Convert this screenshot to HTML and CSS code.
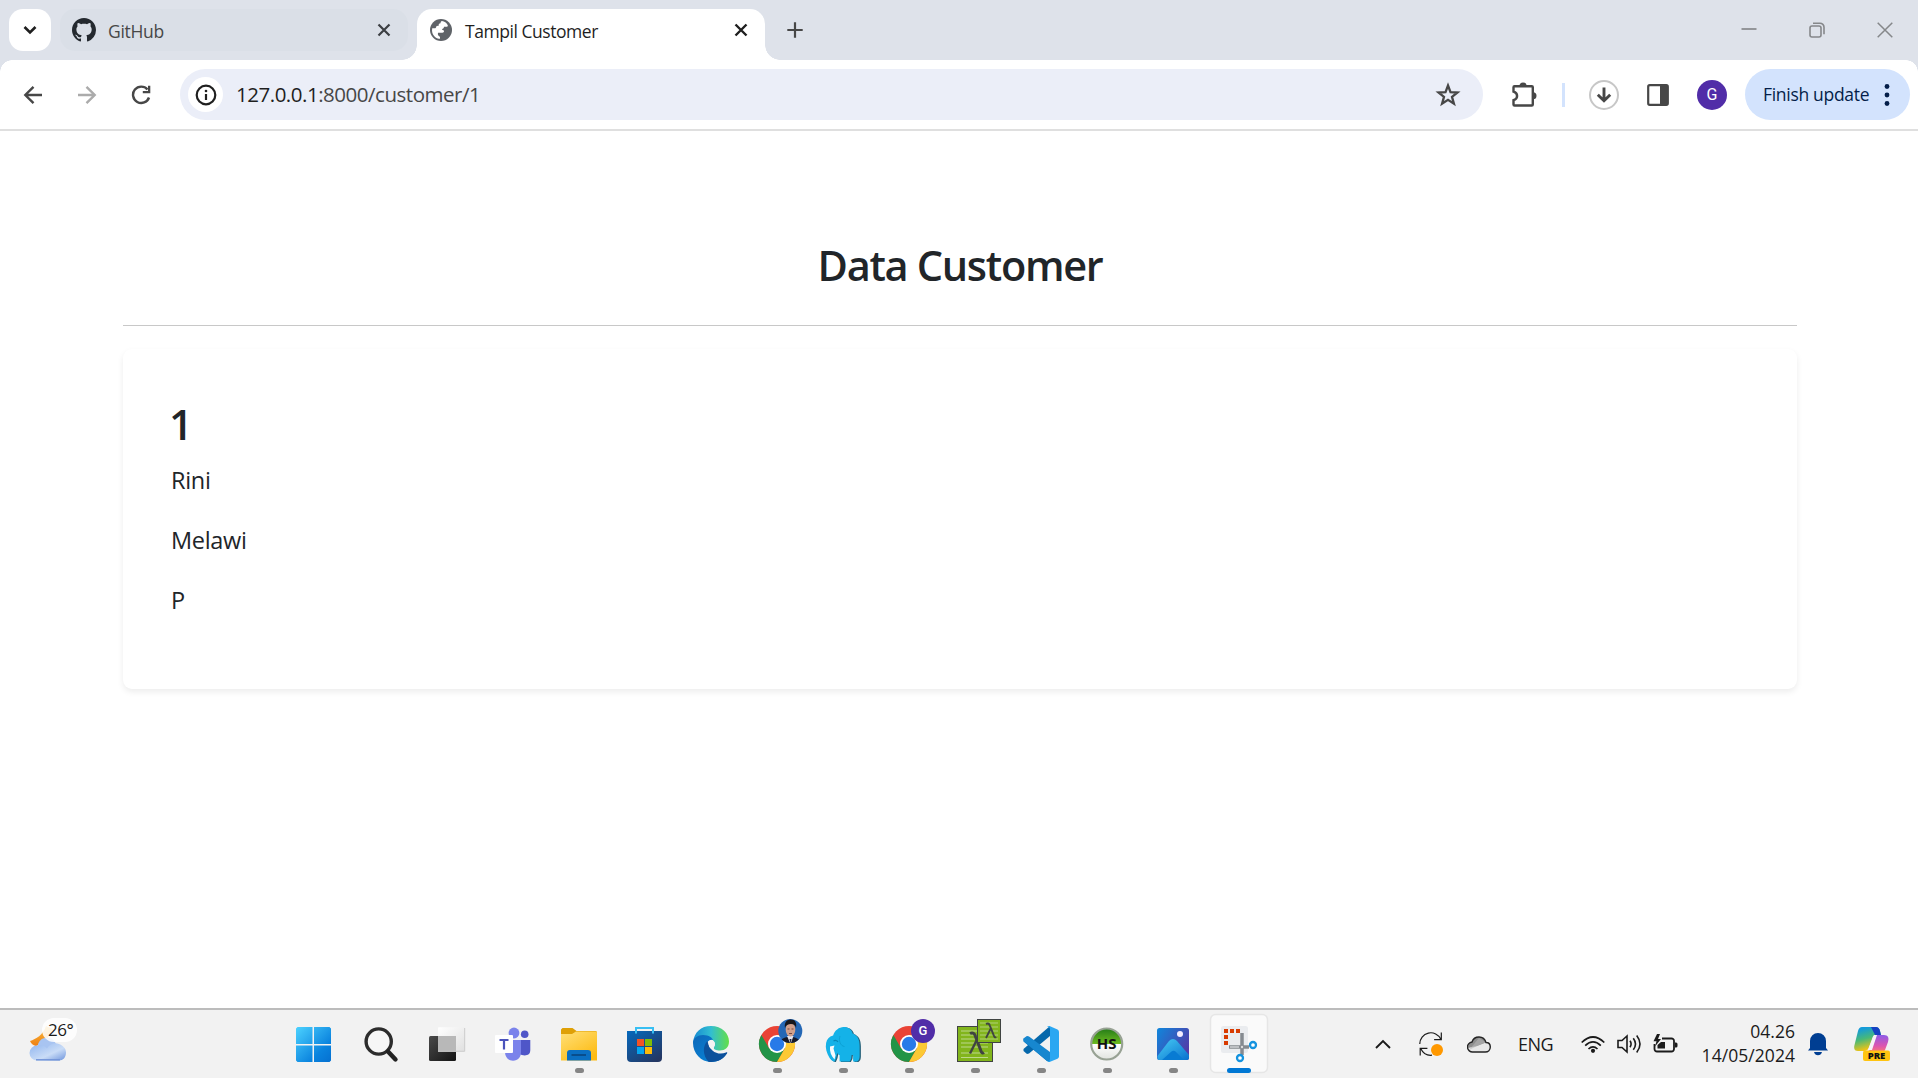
FILE: index.html
```html
<!DOCTYPE html>
<html lang="id">
<head>
<meta charset="utf-8">
<title>Tampil Customer</title>
<link rel="stylesheet" href="styles.css">
</head>
<body>
<div class="screen">
  <header class="tabstrip">
    <button class="tab-search" aria-label="Search tabs"><svg width="42" height="42" viewBox="0 0 42 42"><path d="M15.5 18l5.5 5.5 5.5-5.5" fill="none" stroke="#1f1f1f" stroke-width="2.6"/></svg></button>
    <div class="tab">
      <svg class="favicon" width="24" height="24" viewBox="0 0 16 16"><path fill="#24292f" d="M8 0C3.58 0 0 3.58 0 8c0 3.54 2.29 6.53 5.47 7.59.4.07.55-.17.55-.38 0-.19-.01-.82-.01-1.49-2.01.37-2.53-.49-2.69-.94-.09-.23-.48-.94-.82-1.13-.28-.15-.68-.52-.01-.53.63-.01 1.08.58 1.23.82.72 1.21 1.87.87 2.33.66.07-.52.28-.87.51-1.07-1.78-.2-3.64-.89-3.64-3.95 0-.87.31-1.59.82-2.15-.08-.2-.36-1.02.08-2.12 0 0 .67-.21 2.2.82.64-.18 1.32-.27 2-.27s1.36.09 2 .27c1.53-1.04 2.2-.82 2.2-.82.44 1.1.16 1.92.08 2.12.51.56.82 1.27.82 2.15 0 3.07-1.87 3.75-3.65 3.95.29.25.54.73.54 1.48 0 1.07-.01 1.93-.01 2.2 0 .21.15.46.55.38A8.01 8.01 0 0 0 16 8c0-4.42-3.58-8-8-8z"/></svg>
      <span class="tab-title tab-title-github">GitHub</span>
      <svg class="tab-close" width="14" height="14" viewBox="0 0 14 14"><path d="M1.500 1.500l11 11M12.500 1.500l-11 11" stroke="#3c3f43" stroke-width="2.200"/></svg>
    </div>
    <div class="tab tab-active">
      <svg class="favicon" width="24" height="24" viewBox="0 0 24 24"><circle cx="12" cy="12" r="11" fill="#5f6368"/><path d="M13 3.200c-1 .2-1.500 1.300-1.500 2.300-1.500.2-2 1.200-1.800 2.400l-2.200.2c-.3 1.800-.7 2.200-2 2.400H3.200c-.6 3.500.2 6.500 2.800 8.600 2 1.500 3.500 1.800 5 1.900.3-1.300-.2-2.200-1-2.700-1-.5-1.300-1.500-1-3.300h4.200c1.700-.2 2-1.200 1.700-2.400-1 0-1.700-.3-1.900-1.400 1.300-.3 2-1 2-2.200l2.500-.1c1 .1 1.300-.5 1.300-1.500C17.500 5 15.500 3.500 13 3.200z" fill="#fff" transform="translate(0 -.2)"/><path d="M15.500 9.800c2 .1 3.500 1.200 5 1.200-.1 3.500-1.500 6.500-4.500 8-1.300-1-.4-2.300-.4-3.500 1-.6 1.600-1.500 1.600-2.600-.4-1.400-1.500-1.600-1.700-3.100z" fill="#5f6368"/></svg>
      <span class="tab-title tab-title-customer">Tampil Customer</span>
      <svg class="tab-close" width="14" height="14" viewBox="0 0 14 14"><path d="M1.500 1.500l11 11M12.500 1.500l-11 11" stroke="#1f1f1f" stroke-width="2.400"/></svg>
    </div>
    <svg class="new-tab" width="16" height="16" viewBox="0 0 16 16"><path d="M8 .3v15.400M.3 8h15.400" stroke="#474747" stroke-width="2.200"/></svg>
    <div class="window-controls">
      <svg width="16" height="16" viewBox="0 0 16 16"><path d="M.5 7h15" stroke="#8c8e91" stroke-width="1.800"/></svg>
      <svg width="16" height="16" viewBox="0 0 16 16"><g fill="none" stroke="#85878a" stroke-width="1.600"><rect x="1" y="4" width="11" height="11" rx="2"/><path d="M4 1.200h7a4 4 0 0 1 4 4v7"/></g></svg>
      <svg width="16" height="16" viewBox="0 0 16 16"><path d="M.7.700l14.600 14.600M15.300.7L.7 15.300" stroke="#85878a" stroke-width="1.500"/></svg>
    </div>
  </header>

  <nav class="toolbar">
    <div class="nav-buttons">
      <svg width="20" height="20" viewBox="0 0 20 20"><path d="M10.500 1.800L2.300 10l8.200 8.200M2.500 10H19" fill="none" stroke="#474747" stroke-width="2.400"/></svg>
      <svg width="20" height="20" viewBox="0 0 20 20"><path d="M9.500 1.800L17.700 10l-8.200 8.200M17.500 10H1" fill="none" stroke="#ababab" stroke-width="2.400"/></svg>
      <svg width="20" height="20" viewBox="0 0 20 20"><path d="M16.500 4.500A8.200 8.200 0 1 0 18 12.500" fill="none" stroke="#474747" stroke-width="2.400"/><path d="M19.300.8v7.500h-7.500V6h5.200V.8z" fill="#474747"/></svg>
    </div>
    <div class="omnibox">
      <span class="site-info"><svg width="22" height="22" viewBox="0 0 22 22"><circle cx="11" cy="11" r="9.300" fill="none" stroke="#1f1f1f" stroke-width="2.200"/><path d="M11 10v6" stroke="#1f1f1f" stroke-width="2.200"/><circle cx="11" cy="7" r="1.300" fill="#1f1f1f"/></svg></span>
      <span class="url"><b>127.0.0.1</b>:8000/customer/1</span>
      <svg class="star" width="26" height="26" viewBox="0 0 26 26"><path d="M13 3.500l2.500 6.600 7 .4-5.500 4.400 1.900 6.800-5.900-3.900-5.900 3.900 1.900-6.800-5.500-4.400 7-.4z" fill="none" stroke="#474747" stroke-width="2.300"/></svg>
    </div>
    <svg class="extensions" width="27" height="26" viewBox="0 0 27 26"><path d="M3.500 4.200h17.300a1 1 0 0 1 1 1v17.300a1 1 0 0 1-1 1H3.500a1 1 0 0 1-1-1v-4.300c4.800-1.500 4.800-7 0-8.500V5.200a1 1 0 0 1 1-1z" fill="none" stroke="#474747" stroke-width="2.400"/><path d="M8.500 4a3.500 3.500 0 0 1 7 0zM22 10.300a3.500 3.500 0 0 1 0 7z" fill="#474747"/></svg>
    <span class="divider"></span>
    <svg class="download" width="30" height="30" viewBox="0 0 30 30"><circle cx="15" cy="15" r="14" fill="none" stroke="#c7c7c7" stroke-width="2"/><path d="M15 7.500V20M8.800 14.800l6.200 6 6.200-6" fill="none" stroke="#474747" stroke-width="2.900"/></svg>
    <svg class="side-panel" width="22" height="22" viewBox="0 0 22 22"><rect x="1.200" y="1.200" width="19.600" height="19.600" rx="1.500" fill="none" stroke="#474747" stroke-width="2.200"/><path d="M13 1h7v20h-7z" fill="#474747"/></svg>
    <span class="profile">G</span>
    <div class="update"><span class="update-label">Finish update</span><svg width="6" height="22" viewBox="0 0 6 22"><g fill="#041e49"><circle cx="3" cy="2.500" r="2.400"/><circle cx="3" cy="11" r="2.400"/><circle cx="3" cy="19.500" r="2.400"/></g></svg></div>
  </nav>

  <main class="page">
    <h1 class="page-title">Data Customer</h1>
    <hr class="rule">
    <section class="card">
      <h2 class="card-id">1</h2>
      <p>Rini</p>
      <p>Melawi</p>
      <p>P</p>
    </section>
  </main>

  <footer class="taskbar">
    <div class="weather">
      <svg width="80" height="68" viewBox="0 0 80 68">
        <defs><linearGradient id="cl" x1="0" x2="1" y1="0" y2="1"><stop offset="0" stop-color="#8fb4ee"/><stop offset=".6" stop-color="#c9dcf7"/><stop offset="1" stop-color="#6f95dc"/></linearGradient><linearGradient id="sun" x1="0" x2="0" y1="0" y2="1"><stop offset="0" stop-color="#fbbd3c"/><stop offset="1" stop-color="#ee7f12"/></linearGradient></defs>
        <path d="M30 31c6-2 13-6 16-15l7 3-8 13-9 4c-3-.5-5-2.500-6-5z" fill="url(#sun)"/>
        <path d="M38 34c2-5 6-7 10-6 4 0 6 2 8 6l-4 12H38z" fill="#a8c4f1"/>
        <path d="M37 50.500a7.500 7.500 0 0 1 0-15c5-1 8 .5 10 3 3-5 8-6 12-4.500 5 2 7 5 7 8.500 0 5-3 8-7 8z" fill="url(#cl)"/>
        <path d="M36 49.800h24" stroke="#7395d8" stroke-width="1.500"/>
        <rect x="42" y="8" width="35" height="24" rx="12" fill="#fff" fill-opacity=".85"/>
      </svg>
      <span class="temperature">26°</span>
    </div>

    <div class="apps">
      <svg class="app" viewBox="0 0 66 68"><defs><linearGradient id="win" gradientUnits="userSpaceOnUse" x1="16" y1="17" x2="51" y2="52"><stop offset="0" stop-color="#4cd2ff"/><stop offset=".7" stop-color="#0a83de"/><stop offset="1" stop-color="#0570d0"/></linearGradient></defs><path d="M17.500 17H32.500v17H16V18.500zM34 17h15.500l1.500 1.500V34H34zM16 35.500h16.500V52h-15L16 50.500zM34 35.500h17v15L49.500 52H34z" fill="url(#win)"/></svg>
      <svg class="app" viewBox="0 0 66 68"><circle cx="32.700" cy="31.500" r="12.600" fill="#f6f6f6" stroke="#2c2c2c" stroke-width="3.400"/><path d="M42 41.500l7.500 8" stroke="#222" stroke-width="4.400" stroke-linecap="round"/></svg>
      <svg class="app" viewBox="0 0 66 68"><defs><linearGradient id="tv" x2="1" y2="1"><stop stop-color="#4a4a4a"/><stop offset="1" stop-color="#141414"/></linearGradient><linearGradient id="tw" x2="1" y2="1"><stop stop-color="#fff"/><stop offset="1" stop-color="#e0e0e0"/></linearGradient></defs><rect x="17" y="26" width="27" height="25" rx="1.500" fill="url(#tv)"/><rect x="26" y="17.300" width="26.700" height="24" rx="1" fill="url(#tw)"/><path d="M26 26h18v15.500H26z" fill="#b8b8b8"/><path d="M26 41.300h26.700V18" fill="none" stroke="#ccc"/></svg>
      <svg class="app" viewBox="0 0 66 68"><circle cx="46.700" cy="24.300" r="3.800" fill="#4f56c8"/><path d="M41 30h11.300v10c0 6-6 6.500-11.300 4z" fill="#4f56c8"/><circle cx="36" cy="23" r="5.400" fill="#7b83eb"/><path d="M27 30h16v12c0 5-3 8.700-8 8.700S27 47 27 42z" fill="#7b83eb"/><rect x="17" y="25" width="18" height="18" rx="1" fill="#fff"/><path d="M21.500 30h9M26 30v9.500" stroke="#4b53bc" stroke-width="2.200"/></svg>
      <svg class="app" viewBox="0 0 66 68"><defs><linearGradient id="fo" x2=".7" y2="1"><stop stop-color="#ffe079"/><stop offset="1" stop-color="#fdbb13"/></linearGradient></defs><path d="M17 19.500l1.500-1.500h10l4 3H52l1 1v8H17z" fill="#dfa006"/><path d="M17 24h11l4-2.500h20l1 1v28H17z" fill="url(#fo)"/><path d="M23 50.500V43q0-3 3-3h18q3 0 3 3v7.500z" fill="#0b6fc2"/><path d="M27.500 45h14.500" stroke="#0a4a86" stroke-width="1.800"/><rect class="dot" x="31" y="58" width="9" height="5" rx="2.500"/></svg>
      <svg class="app" viewBox="0 0 66 68"><defs><linearGradient id="st" x2=".8" y2="1"><stop stop-color="#0669bd"/><stop offset="1" stop-color="#243763"/></linearGradient></defs><path d="M17 21h35v27q0 4-4 4H21q-4 0-4-4z" fill="url(#st)"/><path d="M26 23.500V18h17v5.500" fill="none" stroke="#38bff3" stroke-width="2"/><path d="M27 29h7v7h-7z" fill="#f35325"/><path d="M35 29h7v7h-7z" fill="#81bc06"/><path d="M27 37h7v7h-7z" fill="#05a6f0"/><path d="M35 37h7v7h-7z" fill="#ffba08"/></svg>
      <svg class="app" viewBox="0 0 66 68"><defs><linearGradient id="e1" x2="1"><stop stop-color="#1589d3"/><stop offset=".5" stop-color="#32bed1"/><stop offset="1" stop-color="#63df48"/></linearGradient><linearGradient id="e2" x2="1" y2="1"><stop stop-color="#0d67b8"/><stop offset="1" stop-color="#078bdf"/></linearGradient></defs><path d="M17 33C18 22 25 16 35 16c11 0 18 7.500 18 15.500 0 6-4 9-9 9-4 0-7.500-1-6-3.500 3-4-1-8-5-8-7 0-13 3-16 4z" fill="url(#e1)"/><path d="M17 33c0-5 5-8 10-8 6 0 9.500 3 10 5-4-1-7 3-6.500 6C32 45 41 47 51 43c-4 6-9 9-16 9-10 0-18-9-18-19z" fill="url(#e2)"/><path d="M31.500 31c-5 5-5 14 1 20.800 8 1 15-2.500 18.500-8.300.7-1-.2-1.400-1-1-7 3-16.500 0-18.500-11.500z" fill="#0c519c"/><path d="M36 30a4.500 4.500 0 0 1 2 7c-1 1.500 0 2.500 2 3-5-.2-8-3-7-7 .4-2 1.500-3 3-3z" fill="#f3f3f3"/></svg>
      <svg class="app" viewBox="0 0 66 68"><defs><g id="chrome"><circle cx="35" cy="34" r="18" fill="#e94335"/><path d="M35 34L27.200 38.500 19.400 25A18 18 0 0 0 35 52l7.800-13.500z" fill="#229447"/><path d="M35 52A18 18 0 0 0 50.600 25H35l7.800 13.500z" fill="#fcc934"/><circle cx="35" cy="34" r="9" fill="#fff"/><circle cx="35" cy="34" r="7.200" fill="#287ae8"/></g><clipPath id="pc"><circle cx="48.300" cy="21" r="12"/></clipPath></defs><use href="#chrome"/><g clip-path="url(#pc)"><path d="M36 9h25v25H36z" fill="#2467b5"/><path d="M37 34c1-5 5-7 11-7s10 2 11 7z" fill="#171a29"/><path d="M45 26l3.500 8 3-8z" fill="#e5e5f0"/><path d="M47.500 29l1 5 1-5z" fill="#222842"/><ellipse cx="48.500" cy="19.500" rx="4.800" ry="7" fill="#d0a08c"/><path d="M43 18c-1-6 2-8.500 6-8.500s6 3 5 8.500c-1-3-2-4-5-4s-5 1-6 4z" fill="#17171c"/><path d="M45.500 19h2M49.500 19h2M47 23.500h3" stroke="#77473c"/></g><rect class="dot" x="31" y="58" width="9" height="5" rx="2.500"/></svg>
      <svg class="app" viewBox="0 0 66 68"><defs><path id="elephant" d="M22 48c-3-5-4.500-10-3.500-15 .8-4 3-6.500 7-7.500 1.500-5 6-8.500 10.500-8.500 5 0 8 2.500 9 6.500 5 2 7 6 7 12.500V46q0 4-2.500 5.500h-4V45h-1.500q0 4-2 6.500h-10V45q-1.500 0-2.500-2-.5 5-2.500 8.500H26q-2.500-1-4-3.500z"/></defs><use href="#elephant" x=".9" y=".6" fill="#26627a"/><use href="#elephant" x="-.4" fill="#14b2e8"/><path d="M25.500 31q2.500-1.500 4.500.8" stroke="#0887b5" stroke-width="1.200" fill="none"/><path d="M32 26c-1.500 4 0 10 4.500 10.500" fill="none" stroke="#0da2d5" stroke-width="1"/><path d="M22 36.500l4.500-1-1 3 2 7-1 4c-3.500-4-5-8-4.500-13z" fill="#f7fbfd"/><rect class="dot" x="31" y="58" width="9" height="5" rx="2.500"/></svg>
      <svg class="app" viewBox="0 0 66 68"><use href="#chrome"/><circle cx="49" cy="21" r="12" fill="#512da8"/><text class="badge-g" x="49" y="25.300">G</text><rect class="dot" x="31" y="58" width="9" height="5" rx="2.500"/></svg>
      <svg class="app" viewBox="0 0 66 68"><rect x="17.500" y="16.500" width="35" height="35" fill="#82b51c" stroke="#404442"/><path d="M21 21h16M21 25h14M21 29h27M21 33h27M21 37h27M21 43h27M21 47.500h27" stroke="#bcd88b" stroke-width="1.200"/><g fill="none" stroke="#404442"><path stroke-width="3" d="M30 23.500q4-2 5.500 3L41 41q1 3 3 1.500"/><path stroke-width="2.400" d="M36.500 30.500L30 43.500"/></g><rect x="37.500" y="9.500" width="23" height="23" fill="#82b51c" stroke="#404442"/><path d="M40 13h18M40 17h18M40 21h18M40 25h18M40 29h18" stroke="#b0d078"/><g fill="none" stroke="#404442"><path stroke-width="2" d="M46 14q3-1.500 4 2l4 10q.8 2 2.200 1"/><path stroke-width="1.800" d="M50.500 19L46 28"/></g><rect class="dot" x="31" y="58" width="9" height="5" rx="2.500"/></svg>
      <svg class="app" viewBox="0 0 66 68"><path d="M44 24v20L23 27l-2-.5-3.500 3v2L41 51l3 1z" fill="#0874bc"/><path d="M44 16L17.500 39v2l3.500 3 2-.5L44 26z" fill="#0668ab"/><path d="M17.300 28.500L21 26l2 .5L44 42v10l-3-1L18 31.500q-1-1.500-.7-3z" fill="#1787cf"/><path d="M43.500 16l8 3.500q1.500.8 1.500 2.500v24.500q0 1.500-1.500 2.300L43.500 52q-1.500 0-2.500-1 3 1 3-2V19q0-2.500-3-2 1-1 2.500-1z" fill="#2aa7f2"/><rect class="dot" x="31" y="58" width="9" height="5" rx="2.500"/></svg>
      <svg class="app" viewBox="0 0 66 68"><defs><linearGradient id="hs" x2="0" y2="1"><stop stop-color="#237b18"/><stop offset=".5" stop-color="#6ebb20"/><stop offset=".5" stop-color="#fff"/><stop offset="1" stop-color="#e1e4df"/></linearGradient></defs><circle cx="34.700" cy="34" r="15.500" fill="url(#hs)" stroke="#98a294" stroke-width="2.200"/><text class="heidi" x="34.700" y="38.700">HS</text><rect class="dot" x="31" y="58" width="9" height="5" rx="2.500"/></svg>
      <svg class="app" viewBox="0 0 66 68"><defs><linearGradient id="ph" x2="1" y2=".6"><stop stop-color="#0f87dc"/><stop offset="1" stop-color="#513ca9"/></linearGradient><linearGradient id="mt" x2="1" y2="1"><stop stop-color="#48cdf5"/><stop offset="1" stop-color="#0870ce"/></linearGradient></defs><rect x="19" y="18" width="32" height="32" rx="2.500" fill="url(#ph)"/><path d="M19.500 46L31 31q4-4 8 0l12 14v3q0 2-2 2H21q-2 0-1.500-4z" fill="url(#mt)"/><path d="M24 50l9.500-8.500q2-1.500 4 0L46 50z" fill="#087bd3"/><circle cx="42" cy="24" r="3" fill="#f4edff"/><rect class="dot" x="31" y="58" width="9" height="5" rx="2.500"/></svg>
      <svg class="app" viewBox="0 0 66 68"><rect x="6.500" y="4.500" width="57" height="58" rx="5" fill="#fafafa" stroke="#e6e6e6" stroke-width="1.500"/><rect x="17" y="16" width="27" height="27" rx="2.500" fill="#eaecef"/><path d="M20 19h4v4h-4zM26 19h4v4h-4zM32 19h4v4h-4zM20 25h4v4h-4zM20 31h4v4h-4z" fill="#d83b01"/><path d="M38 23v22M25 37h20" stroke="#858a90" stroke-width="3.500"/><path d="M26 37h9" stroke="#bdc0c4" stroke-width="2"/><circle cx="38" cy="37" r="1.200" fill="#ddd"/><g fill="#fff" stroke="#1493df" stroke-width="2.300"><circle cx="49" cy="35" r="3"/><circle cx="36" cy="48" r="3"/></g><rect x="23" y="58" width="24" height="5" rx="2.500" fill="#0078d4"/></svg>
    </div>

    <div class="tray">
      <svg width="16" height="10" viewBox="0 0 16 10"><path d="M1 9l7-7 7 7" fill="none" stroke="#1b1b1b" stroke-width="1.900"/></svg>
      <svg class="sync" width="24" height="24" viewBox="0 0 24 24"><path d="M.8 12A11 11 0 0 1 21.800 7.200M22.300.5v7.200h-7.200M1.200 23.500v-7.200h7.200M2 17a11 11 0 0 0 11 6.200" fill="none" stroke="#1b1b1b" stroke-width="1.200"/><circle cx="18" cy="18" r="6" fill="#ff9800"/></svg>
      <svg class="cloud" width="24" height="17" viewBox="0 0 24 17"><path d="M6 16A5 5 0 0 1 5 6c1-3 4-5 7-5 4 0 6 2 7 5.500 3 0 4.300 2.300 4.300 4.600 0 3-2.300 4.900-5 4.900z" fill="#e8e8e8"/><path d="M1 12c0-3 1-5.500 4-6 1-3 4-5 7-5s6 2 7 5.500L10 10z" fill="#8d8d8d"/><path d="M2 14l12-6 5-1.500L12 2z" fill="#b5b5b5" opacity=".6"/><path d="M6 16A5 5 0 0 1 5 6c1-3 4-5 7-5 4 0 6 2 7 5.500 3 0 4.300 2.300 4.300 4.600 0 3-2.300 4.900-5 4.900z" fill="none" stroke="#242424" stroke-width="1.400"/></svg>
      <span class="language">ENG</span>
      <svg class="wifi" width="24" height="17" viewBox="0 0 24 17"><g fill="none" stroke="#1b1b1b" stroke-width="1.700"><path d="M.7 6.500Q12-4.500 23.300 6.500"/><path d="M4.200 9.700q7.800-7.500 15.600 0"/><path d="M7.500 13q4.500-4.400 9 0"/></g><circle cx="12" cy="14.800" r="2.100" fill="#1b1b1b"/></svg>
      <svg class="speaker" width="25" height="20" viewBox="0 0 25 20"><g fill="none" stroke="#1b1b1b" stroke-width="1.600"><path d="M1 6.500h4L10 2v16l-5-4.500H1z"/><path d="M13 6.800q2.200 3.200 0 6.400M16.300 4.200q4.400 5.800 0 11.600M19.700 1.500q6.600 8.500 0 17"/></g></svg>
      <svg class="battery" width="25" height="20" viewBox="0 0 25 20"><path d="M9 4.500h9.500a2.500 2.500 0 0 1 2.500 2.500v8a2.500 2.500 0 0 1-2.500 2.500H4A2.500 2.500 0 0 1 1.500 15v-5" fill="none" stroke="#1b1b1b" stroke-width="1.800"/><path d="M22 8.500h1a1.500 1.500 0 0 1 1.500 1.500v2a1.500 1.500 0 0 1-1.500 1.500h-1zM8 8h4v6.500H4.500V11z" fill="#1b1b1b"/><path d="M4 0L.5 7.200h3L2 12.500l6-7.500H5L7 0z" fill="#1b1b1b"/></svg>
      <div class="clock"><span>04.26</span><span>14/05/2024</span></div>
      <svg class="bell" width="20" height="24" viewBox="0 0 20 24"><path d="M2 16V9a8 8 0 0 1 16 0v7l2 2.500H0zM6 20h8q-1 3.200-4 3.200T6 20z" fill="#003e92"/></svg>
      <svg class="copilot" width="36" height="36" viewBox="0 0 36 36"><defs><linearGradient id="c1" x2=".3" y2="1"><stop offset=".15" stop-color="#159bd9"/><stop offset=".55" stop-color="#48b978"/><stop offset="1" stop-color="#f5c411"/></linearGradient><linearGradient id="c2" x2="0" y2="1"><stop stop-color="#8d5be7"/><stop offset=".6" stop-color="#dc55b0"/><stop offset="1" stop-color="#ff7c6d"/></linearGradient></defs><path d="M8 1h14q3 0 4 4l1 4h-6q-2 0-3 4l-3 8q-1 4-5 4H4q-5 0-3.500-6L4 5q1-4 4-4z" fill="url(#c1)"/><path d="M17 1h5q3 0 4 4l1 4h-6z" fill="#1541c2"/><path d="M22 9h8q6 0 4 7l-3 8q-1 3-5 3H11q4-1 5-4l3-10q1-4 3-4z" fill="url(#c2)"/><path d="M20 9h3l-5 15h-4z" fill="#f8f2f8"/><rect x="9" y="24.500" width="27" height="10.500" rx="2" fill="#ffc411"/><text class="pre" x="22.500" y="33.200">PRE</text></svg>
    </div>
  </footer>
</div>
</body>
</html>
```
FILE: styles.css
```css
* { box-sizing: border-box; }
body { margin: 0; background: #fff; font-family: "Open Sans", "Noto Sans", sans-serif; color: #212529; }
svg { display: block; flex: none; }
.screen { width: 1918px; height: 1078px; display: flex; flex-direction: column; overflow: hidden; }

.tabstrip { height: 60px; flex: none; display: flex; align-items: flex-start; padding-left: 9px; background: #dee2ea; }
.tab-search { width: 42px; height: 42px; margin: 9px 9px 0 0; padding: 0; border: 0; border-radius: 14px; background: #fff; }
.tab { width: 348px; height: 42px; margin: 9px 9px 0 0; padding: 0 17px 0 12px; display: flex; align-items: center; border-radius: 15px; background: #dadfe7; }
.tab-active { position: relative; height: 51px; margin-right: 22px; padding-bottom: 9px; border-radius: 15px 15px 0 0; background: #fff; }
.tab-active::before, .tab-active::after { content: ""; position: absolute; bottom: 0; width: 15px; height: 15px; }
.tab-active::before { left: -15px; background: radial-gradient(circle at 0 0, transparent 14.5px, #fff 15px); }
.tab-active::after { right: -15px; background: radial-gradient(circle at 100% 0, transparent 14.5px, #fff 15px); }
.tab-title { flex: 1; margin-left: 12px; padding-top: 2px; font-size: 17.5px; line-height: 24px; white-space: nowrap; color: #474747; }
.tab-title-github { letter-spacing: -.3px; }
.tab-title-customer { color: #1f1f1f; letter-spacing: -.45px; }
.new-tab { margin-top: 22px; }
.window-controls { display: flex; gap: 52px; margin: 22px 25px 0 auto; }

.toolbar { position: relative; height: 71px; flex: none; display: flex; align-items: center; padding: 0 8px 0 23px; background: #fff; border-bottom: 2px solid #dfdfdf; }
.toolbar::before, .toolbar::after { content: ""; position: absolute; top: 0; width: 12px; height: 12px; }
.toolbar::before { left: 0; background: radial-gradient(circle at 100% 100%, transparent 11.5px, #dee2ea 12px); }
.toolbar::after { right: 0; background: radial-gradient(circle at 0 100%, transparent 11.5px, #dee2ea 12px); }
.nav-buttons { width: 157px; display: flex; gap: 34px; }
.omnibox { width: 1303px; height: 51px; padding: 0 22px 0 8px; display: flex; align-items: center; border-radius: 26px; background: #ebeef8; }
.site-info { width: 35px; height: 35px; display: grid; place-items: center; border-radius: 50%; background: #fff; }
.url { flex: 1; margin-left: 13px; padding-bottom: 2px; font-size: 20.5px; letter-spacing: -.48px; color: #474747; }
.url b { font-weight: 400; color: #1f1f1f; }
.extensions { margin: 0 24px 0 28px; }
.divider { width: 3px; height: 24px; background: #d3e3fd; }
.download { margin-left: 24px; }
.side-panel { margin: 0 28px; }
.profile { width: 30px; height: 30px; display: grid; place-items: center; border-radius: 50%; background: #512da8; color: #fff; font: 16px Roboto, sans-serif; }
.update { width: 165px; height: 51px; margin-left: auto; padding: 0 20px 0 18px; display: flex; align-items: center; justify-content: space-between; border-radius: 26px; background: #d3e3fd; color: #041e49; font-size: 17.5px; letter-spacing: -.3px; white-space: nowrap; }
.update-label { padding-bottom: 2px; }

.page { height: 877px; flex: none; padding: 110px 121px 0 123px; background: #fff; }
.page-title { margin: 0; height: 84px; text-align: center; font-size: 41.5px; line-height: 49px; font-weight: 600; letter-spacing: -1.3px; }
.rule { margin: 0; height: 1px; border: 0; background: #c8c8c8; }
.card { height: 340px; margin-top: 23px; padding: 50px 48px 48px; border-radius: 9px; background: #fff; box-shadow: 0 3px 6px rgba(0, 0, 0, .075); }
.card-id { margin: 0 0 13px -2px; font-size: 42px; line-height: 50px; font-weight: 600; }
.card p { margin: 0 0 24px; font-size: 23.5px; line-height: 36px; letter-spacing: -.3px; }

.taskbar { height: 70px; flex: none; display: flex; border-top: 2px solid #bcbcbc; background: #f2f2f2; color: #1b1b1b; }
.weather { width: 280px; position: relative; }
.temperature { position: absolute; left: 48px; top: 8px; font-size: 17px; line-height: 24px; letter-spacing: -.5px; }
.apps { display: flex; width: 990px; }
.app { width: 66px; height: 68px; }
.dot { fill: #858585; }
.badge-g { font: 500 13px Roboto, sans-serif; fill: #fff; text-anchor: middle; }
.heidi { font: 700 15px "Open Sans", sans-serif; fill: #111; text-anchor: middle; }
.pre { font: 800 9.5px "Open Sans", sans-serif; fill: #111; text-anchor: middle; }
.tray { flex: 1; display: flex; align-items: center; padding: 0 28px 0 105px; }
.sync { margin-left: 28px; }
.cloud { margin-left: 24px; }
.language { width: 36px; margin-left: 27px; font-size: 18px; letter-spacing: -.5px; }
.wifi { margin-left: 27px; }
.speaker { margin-left: 12px; }
.battery { margin-left: 11px; }
.clock { width: 117px; display: flex; flex-direction: column; align-items: flex-end; padding-bottom: 3px; font-size: 17.5px; line-height: 24px; letter-spacing: .05px; }
.bell { margin-left: 13px; }
.copilot { margin-left: auto; }
```
